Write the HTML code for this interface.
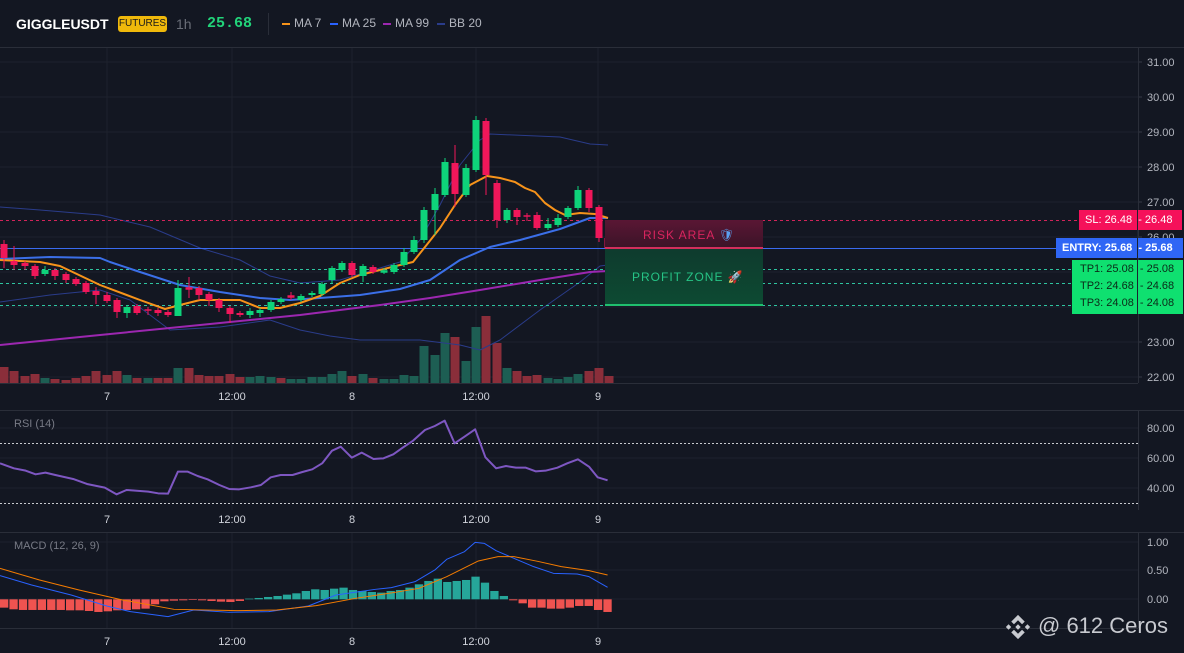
<!DOCTYPE html>
<html><head><meta charset="utf-8"><style>
html,body{margin:0;padding:0;background:#131722;}
body{width:1184px;height:653px;overflow:hidden;position:relative;font-family:"Liberation Sans",sans-serif;}
svg{position:absolute;left:0;top:0}
.t{position:absolute;white-space:nowrap}
</style></head><body>
<svg id="s" width="1184" height="653" xmlns="http://www.w3.org/2000/svg" font-family="Liberation Sans, sans-serif"></svg>
<div class="t" style="left:16px;top:16px;color:#fff;font-weight:bold;font-size:14px;">GIGGLEUSDT</div>
<div class="t" style="left:118px;top:16px;width:49px;height:16px;background:#f0b90b;border-radius:3px;color:#1a1a1a;font-size:10px;line-height:16px;text-align:center;">FUTURES</div>
<div class="t" style="left:176px;top:16px;color:#6a6e78;font-size:14px;">1h</div>
<div class="t" style="left:207px;top:15px;color:#22d47a;font-size:15px;font-weight:bold;font-family:'Liberation Mono',monospace;">25.68</div>
<div class="t" style="left:268px;top:13px;width:1px;height:22px;background:#2a2e39;"></div>
<div class="t" style="left:282px;top:23px;width:8px;height:2px;background:#f7931a;"></div>
<div class="t" style="left:294px;top:16px;color:#b2b5be;font-size:12px;">MA 7</div>
<div class="t" style="left:330px;top:23px;width:8px;height:2px;background:#2962ff;"></div>
<div class="t" style="left:342px;top:16px;color:#b2b5be;font-size:12px;">MA 25</div>
<div class="t" style="left:383px;top:23px;width:8px;height:2px;background:#9c27b0;"></div>
<div class="t" style="left:395px;top:16px;color:#b2b5be;font-size:12px;">MA 99</div>
<div class="t" style="left:437px;top:23px;width:8px;height:2px;background:#2a3c8a;"></div>
<div class="t" style="left:449px;top:16px;color:#b2b5be;font-size:12px;">BB 20</div>
<div class="t" style="left:14px;top:418px;color:#787b86;font-size:11px;">RSI (14)</div>
<div class="t" style="left:14px;top:540px;color:#787b86;font-size:11px;">MACD (12, 26, 9)</div>
<div class="t" style="left:605px;top:220px;width:158px;height:29px;background:linear-gradient(#5a1634,#3c1428);border-bottom:2px solid #d12f5c;box-sizing:border-box;"></div>
<div class="t" style="left:605px;top:249px;width:158px;height:57px;background:linear-gradient(#0e3b2e,#0d4a32);border-bottom:2px solid #1fbf6e;box-sizing:border-box;"></div>
<div class="t" style="left:643px;top:228px;color:#d9245e;font-size:12px;letter-spacing:1px;">RISK AREA <span style="color:#5aa0f0">&#x1F6E1;</span></div>
<div class="t" style="left:632px;top:270px;color:#26c486;font-size:12px;letter-spacing:1px;">PROFIT ZONE <span style="color:#e07070">&#x1F680;</span></div>
<div class="t" style="left:1079px;top:210px;width:103px;height:20px;background:#f5115a;color:#fff;font-size:11px;line-height:20px;padding-left:6px;box-sizing:border-box;">SL: 26.48&nbsp;&nbsp;- 26.48</div>
<div class="t" style="left:1056px;top:238px;width:127px;height:20px;background:#2f66f5;color:#fff;font-size:11px;font-weight:bold;line-height:20px;padding-left:6px;box-sizing:border-box;">ENTRY: 25.68&nbsp;&nbsp;- 25.68</div>
<div class="t" style="left:1072px;top:260px;width:111px;height:54px;background:#0fe070;color:#0b2a18;font-size:11px;line-height:17px;padding:1px 0 0 8px;box-sizing:border-box;">TP1: 25.08&nbsp;&nbsp;- 25.08<br>TP2: 24.68&nbsp;&nbsp;- 24.68<br>TP3: 24.08&nbsp;&nbsp;- 24.08</div>
<div class="t" style="left:1137px;top:210px;width:1px;height:104px;background:#1a2330;"></div>
<div class="t" style="left:1038px;top:613px;color:#c8cad0;font-size:22px;">@ 612 Ceros</div>
<svg width="1184" height="653" style="pointer-events:none">
<g fill="#c8cad0" transform="translate(1018,627) scale(1.35)">
<path d="M0,-9 L5,-4 L3,-2 L0,-5 L-3,-2 L-5,-4Z"/><path d="M0,9 L5,4 L3,2 L0,5 L-3,2 L-5,4Z"/>
<path d="M-9,0 L-7,-2 L-5,0 L-7,2Z"/><path d="M9,0 L7,-2 L5,0 L7,2Z"/><path d="M0,-2 L2,0 L0,2 L-2,0Z"/>
</g></svg>
<script>
var s=document.getElementById('s'),h='';
function L(x1,y1,x2,y2,c,w,d){h+='<line x1="'+x1+'" y1="'+y1+'" x2="'+x2+'" y2="'+y2+'" stroke="'+c+'" stroke-width="'+(w||1)+'"'+(d?' stroke-dasharray="'+d+'"':'')+'/>';}
function P(pts,c,w,tr){h+='<polyline fill="none" stroke="'+c+'" stroke-width="'+w+'" stroke-linejoin="round" vector-effect="non-scaling-stroke" points="'+pts+'"'+(tr?' transform="'+tr+'"':'')+'/>';}
function T(x,y,t,c,sz,a){h+='<text x="'+x+'" y="'+y+'" fill="'+c+'" font-size="'+sz+'"'+(a?' text-anchor="'+a+'"':'')+'>'+t+'</text>';}
L(0,47.5,1184,47.5,'#2a2e39');
var g='#1e222d';
for(var i=0;i<10;i++){var y=62+i*35;L(0,y,1138,y,g);L(1138,y,1142,y,'#363a45');T(1147,y+4,(31-i).toFixed(2),'#b2b5be',11);}
[107,232,352,476,598].forEach(function(x){L(x,48,x,383,g);L(x,410,x,510,g);L(x,533,x,628,g);});
[428,458,488].forEach(function(y,i){L(0,y,1138,y,g);T(1147,y+4,['80.00','60.00','40.00'][i],'#b2b5be',11);});
[542,570,599].forEach(function(y,i){L(0,y,1138,y,g);T(1147,y+4,['1.00','0.50','0.00'][i],'#b2b5be',11);});
L(0,383.5,1138,383.5,'#2a2e39');L(0,410.5,1184,410.5,'#2a2e39');L(0,532.5,1184,532.5,'#2a2e39');L(0,628.5,1138,628.5,'#2a2e39');
L(1138.5,48,1138.5,383,'#2a2e39');L(1138.5,410,1138.5,510,'#2a2e39');L(1138.5,533,1138.5,628,'#2a2e39');
[[107,'7'],[232,'12:00'],[352,'8'],[476,'12:00'],[598,'9']].forEach(function(a){T(a[0],400,a[1],'#d1d4dc',11,'middle');T(a[0],523,a[1],'#d1d4dc',11,'middle');T(a[0],645,a[1],'#d1d4dc',11,'middle');});
L(0,443.5,1138,443.5,'#c8cad0',1,'2 2');L(0,503.5,1138,503.5,'#c8cad0',1,'2 2');
var vol=[[4,16,0],[14,12,0],[25,7,0],[35,9,0],[45,5,1],[55,4,0],[66,3,0],[76,5,0],[86,7,0],[96,12,0],[107,8,0],[117,12,0],[127,8,1],[137,5,0],[148,5,1],[158,5,0],[168,5,0],[178,15,1],[189,15,0],[199,8,0],[209,7,0],[219,7,0],[230,9,0],[240,6,0],[250,6,1],[260,7,1],[271,6,1],[281,5,0],[291,4,1],[301,4,1],[312,6,1],[322,6,1],[332,9,1],[342,12,1],[352,7,0],[363,9,1],[373,5,0],[384,4,1],[394,4,1],[404,8,1],[414,7,1],[424,37,1],[435,28,1],[445,50,1],[455,46,0],[466,22,1],[476,56,1],[486,67,0],[497,40,0],[507,15,1],[517,12,0],[527,7,0],[537,8,0],[548,5,1],[558,4,1],[568,6,1],[578,9,1],[589,12,0],[599,15,0],[609,7,0]];
vol.forEach(function(v){h+='<rect x="'+(v[0]-4.5)+'" y="'+(383-v[1])+'" width="9" height="'+v[1]+'" fill="'+(v[2]?'#1d5e53':'#8a2e3a')+'"/>';});
P('0,207 40,210 100,215 150,227 200,248 240,260 270,276 300,283 340,280 380,268 400,262 420,240 440,205 460,165 480,140 490,134 560,137 590,144 608,145','#2a3c8a',1);
P('0,302 50,295 100,290 130,300 170,330 220,327 270,320 300,330 330,336 360,340 420,340 460,345 480,350 500,340 540,310 580,282 600,266 608,265','#2a3c8a',1);
L(0,220.5,1080,220.5,'#d1245a',1,'3 3');L(0,248.5,1056,248.5,'#3a6bf0',1);
[269.5,283.5,305.5].forEach(function(y){L(0,y,1072,y,'#2ec4a0',1,'3 3');});
P('0,345 100,335 200,325 300,315 380,305 430,298 480,290 540,280 590,272 608,271','#9c27b0',2);
P('0,259 50,257 100,258 110,262 140,272 180,285 220,292 260,298 290,300 320,298 360,295 400,289 430,280 460,260 490,247 520,240 560,229 590,218 608,218','#3b6fe8',2);
P('0,260 40,262 60,266 100,285 140,300 165,309 180,305 200,300 240,300 260,308 280,308 300,303 320,296 340,283 360,275 380,270 400,265 413,262 425,247 440,228 455,205 470,185 487,176 500,178 515,182 525,188 535,192 545,203 555,210 565,215 580,213 595,214 608,218','#f7931a',2);
var cd=[[4,244,258,240,268],[14,261,265,246,270],[25,263,266,261,270],[35,266,276,264,279],[45,274,270,266,276],[55,270,276,268,280],[66,274,280,272,283],[76,279,284,277,286],[86,283,292,281,294],[96,291,295,287,304],[107,295,301,292,303],[117,300,312,298,318],[127,313,307,305,318],[137,306,313,304,315],[148,310,310,307,315],[158,310,313,308,316],[168,312,315,310,317],[178,316,288,280,316],[189,288,289,277,298],[199,288,295,286,300],[209,294,300,292,306],[219,300,308,298,312],[230,308,314,306,323],[240,313,315,311,317],[250,315,311,308,318],[260,313,310,308,317],[271,310,302,300,312],[281,302,299,297,304],[291,296,297,292,300],[301,300,296,294,302],[312,295,293,291,297],[322,294,284,282,296],[332,280,268,266,283],[342,270,263,261,272],[352,263,275,261,277],[363,276,266,264,282],[373,267,272,265,274],[384,272,271,268,274],[394,272,265,263,274],[404,265,252,248,267],[414,252,240,236,254],[424,240,210,207,243],[435,210,194,188,235],[445,195,162,158,197],[455,163,194,145,207],[466,195,168,164,197],[476,170,120,116,172],[486,121,175,118,195],[497,183,220,180,228],[507,220,210,208,223],[517,210,217,208,225],[527,216,216,213,221],[537,215,228,212,230],[548,228,224,218,230],[558,225,218,214,227],[568,217,208,206,219],[578,208,190,186,210],[589,190,208,188,212],[599,207,238,205,242],[608,238,248,236,250]];
cd.forEach(function(c){var up=c[2]<c[1],col=up?'#0ed37a':'#f0175a',t=Math.min(c[1],c[2]),b=Math.max(c[1],c[2]);if(b-t<1.5){t-=0.75;b+=0.75;}
L(c[0],c[3],c[0],c[4],col,1);h+='<rect x="'+(c[0]-3.5)+'" y="'+t+'" width="7" height="'+(b-t)+'" fill="'+col+'"/>';});
var tr='translate(0,400) scale(0.3953,0.3333)';
P('0,190 35,205 65,212 90,223 115,218 140,225 185,237 220,252 265,263 295,283 320,270 375,275 400,280 425,281 450,215 475,215 500,228 525,238 555,255 580,267 605,268 635,262 660,255 685,232 710,225 740,225 765,216 790,208 815,190 840,152 862,140 890,173 915,158 945,177 970,175 995,163 1020,142 1045,122 1075,90 1100,78 1125,62 1150,130 1175,110 1202,88 1228,172 1255,205 1280,198 1305,203 1330,203 1355,214 1380,212 1410,203 1435,190 1462,178 1490,200 1512,232 1537,241','#7e57c2',2,tr);
var hv=[-25,-30,-32,-32,-32,-32,-32,-33,-33,-35,-38,-36,-33,-32,-30,-28,-15,-6,-4,-3,-2,-3,-5,-7,-8,-5,2,4,7,10,14,18,25,30,28,32,35,28,25,22,20,25,28,35,45,55,62,52,55,58,68,50,25,10,-3,-12,-25,-25,-28,-28,-25,-20,-20,-32,-38];
var hs='';hv.forEach(function(v,i){var x=i*23.85;hs+='<rect x="'+x+'" y="'+(v>0?598-v:598)+'" width="21" height="'+Math.abs(v)+'" fill="'+(v>0?'#26a69a':'#ef5350')+'"/>';});
h+='<g transform="'+tr+'">'+hs+'</g>';
P('0,527 80,555 180,585 270,618 330,635 425,650 490,630 580,637 680,635 780,618 850,585 950,568 990,563 1050,545 1100,510 1130,478 1175,455 1202,427 1225,430 1255,452 1300,475 1350,500 1400,520 1460,522 1490,530 1537,562','#2962ff',1,tr);
P('0,505 100,540 200,570 310,600 440,628 600,632 700,630 800,617 900,595 1000,577 1060,565 1130,530 1210,483 1260,470 1300,470 1360,484 1420,500 1490,512 1537,525','#f57c00',1,tr);
s.innerHTML=h;
</script>
</body></html>
